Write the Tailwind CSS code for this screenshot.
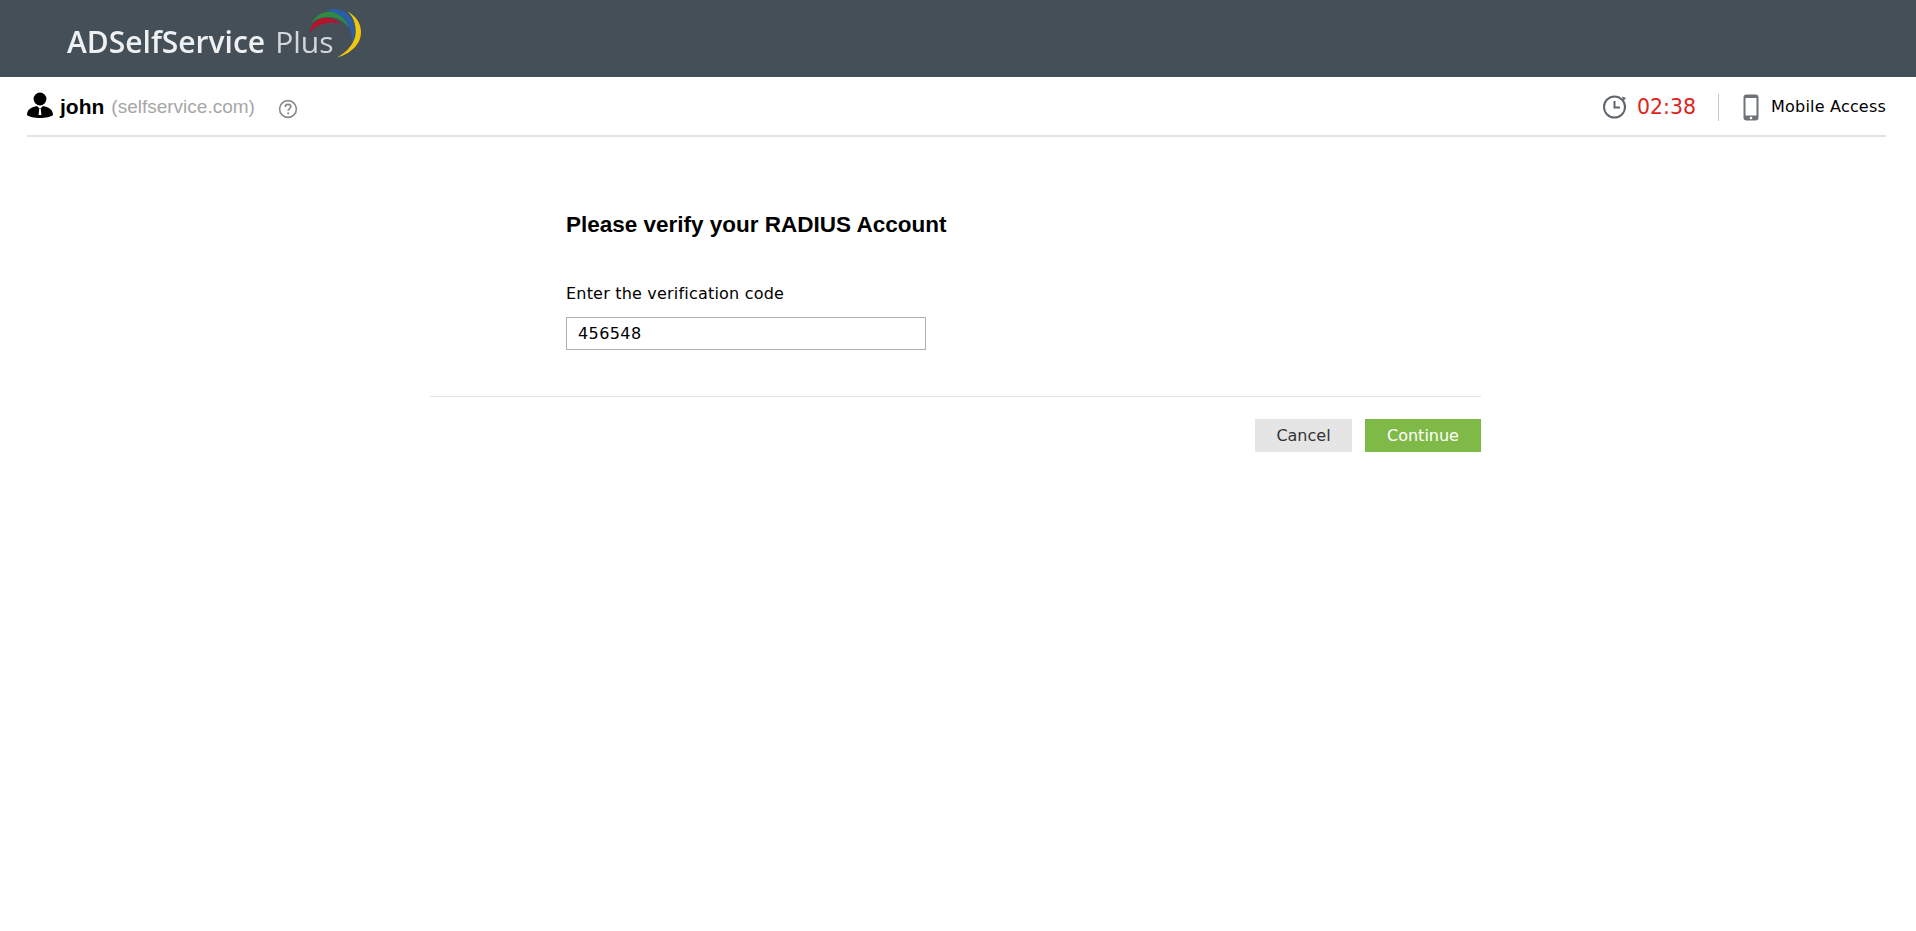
<!DOCTYPE html>
<html lang="en">
<head>
    <meta charset="UTF-8">
    <title>ADSelfService Plus</title>
    <script src="https://cdn.jsdelivr.net/npm/@tailwindcss/browser@4"></script>
</head>
<body class="bg-white min-h-[931px] font-['DejaVu_Sans',sans-serif] text-black">
    <!-- Header -->
    <div class="h-[77px] bg-[#444f58] flex items-start pl-[67px]">
        <div class="relative flex items-baseline pt-[24px] text-[#eef0f1] font-['Open_Sans',sans-serif] text-[30px] leading-[36px] blur-[0.3px]">
            <span class="font-semibold">ADSelfService</span>
            <span class="ml-[10px] font-normal text-[#d3d7d9]">Plus</span>
            <svg class="absolute left-[239px] top-[8px]" width="60" height="52" viewBox="0 0 60 52">
                <path d="M3 26C5 16 11 10 19 10C26 10 31 12 34 16C29 14.5 24 14 19 15.5C12 17 7 20 3 26Z" fill="#b5132b"/>
                <path d="M5.5 15C10 7 17 3.5 25 3.5C34 3.5 40 10 43 20C38 13 31 9.5 24 9C16 8.5 10 11 5.5 15Z" fill="#2f8a45"/>
                <path d="M20 2C28 0 38 1 44 8C49 14 50 26 46 36C46.5 26 44 18 39 12C34 6.5 27 3.5 20 2Z" fill="#2a5fa8"/>
                <path d="M41 3C50 8 55 15 55 24C55 37 44 46 31 49.5C41 44 49.5 35 49.7 24C49.8 15 47 8 41 3Z" fill="#f0c60f"/>
            </svg>
        </div>
    </div>

    <!-- User bar -->
    <div class="ml-[27px] w-[1859px] h-[60px] pt-[2px] border-b-2 border-[#e4e4e4] flex items-center justify-between">
        <div class="flex items-center">
            <svg width="26" height="26" viewBox="0 0 26 26" class="mr-[7px] mb-[5px]">
                <circle cx="13" cy="7" r="6.4" fill="#000"/>
                <path d="M0 23C0 17 5 15 10 14L13 17L16 14C21 15 26 17 26 23C22 27 4 27 0 23Z" fill="#000"/>
                <path d="M12.2 17H13.8L14.4 23H11.6Z" fill="#fff"/>
            </svg>
            <span class="font-['Liberation_Sans',sans-serif] font-bold text-[21px]">john</span>
            <span class="ml-[7px] font-['Liberation_Sans',sans-serif] text-[19px] text-[#a6a6a6]">(selfservice.com)</span>
            <svg width="20" height="20" viewBox="0 0 20 20" class="ml-[23px] mt-[3px]">
                <circle cx="10" cy="10" r="8.4" fill="none" stroke="#8a8a8a" stroke-width="1.6"/>
                <path d="M7.3 8C7.3 6.4 8.5 5.4 10 5.4C11.6 5.4 12.8 6.4 12.8 7.8C12.8 9.6 10.2 9.8 10.2 11.8" fill="none" stroke="#8a8a8a" stroke-width="1.7"/>
                <circle cx="10.2" cy="14.3" r="1.1" fill="#8a8a8a"/>
            </svg>
        </div>
        <div class="flex items-center">
            <svg width="26" height="26" viewBox="0 0 26 26" class="mb-[2px]">
                <circle cx="12.5" cy="14" r="10.5" fill="none" stroke="#5e666c" stroke-width="2"/>
                <path d="M12.5 8V14.5H18" fill="none" stroke="#5e666c" stroke-width="2"/>
                <path d="M20 3.5L24 5L21.5 8Z" fill="#5e666c"/>
            </svg>
            <span class="ml-[9px] text-[20.5px] text-[#e0231c]">02:38</span>
            <div class="ml-[22px] h-[27px] w-px bg-[#c8c8c8]"></div>
            <svg width="16" height="27" viewBox="0 0 16 27" class="ml-[24px]">
                <rect x="0.5" y="0.5" width="15" height="26" rx="3" fill="#6d7377"/>
                <rect x="2.5" y="4" width="11" height="17.5" fill="#fff"/>
                <circle cx="8" cy="24" r="1.3" fill="#fff"/>
            </svg>
            <span class="ml-[12px] text-[16px] tracking-[0.2px]">Mobile Access</span>
        </div>
    </div>

    <!-- Verification form -->
    <div class="ml-[430px] w-[1051px]">
        <div class="pl-[136px] pt-[75px] pb-[46px] border-b border-[#e4e4e4]">
            <h1 class="font-['Liberation_Sans',sans-serif] font-bold text-[22.5px] leading-[26px]">Please verify your RADIUS Account</h1>
            <label class="block mt-[47px] text-[16px] tracking-[0.2px] leading-[18px]">Enter the verification code</label>
            <input type="text" value="456548" class="block mt-[14px] w-[360px] h-[33px] border border-[#b0b0b0] pl-[11px] text-[16px] tracking-[0.4px] text-black outline-none">
        </div>
        <div class="flex justify-end gap-[13px] mt-[22px]">
            <button class="w-[97px] h-[33px] bg-[#e5e5e5] text-[#333] text-[16px]">Cancel</button>
            <button class="w-[116px] h-[33px] bg-[#7fba48] text-white text-[16px]">Continue</button>
        </div>
    </div>
</body>
</html>
